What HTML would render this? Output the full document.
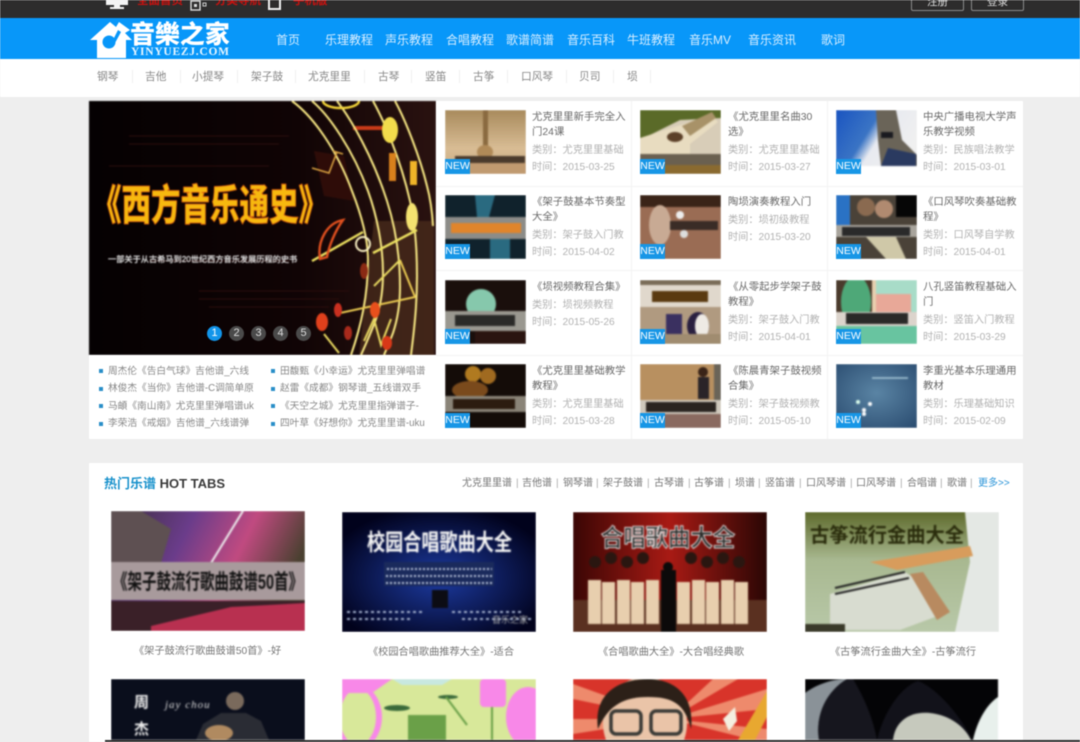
<!DOCTYPE html>
<html lang="zh"><head><meta charset="utf-8"><title>音樂之家</title>
<style>
*{margin:0;padding:0;box-sizing:border-box}
html,body{width:1080px;height:742px;overflow:hidden;background:#eeeeee}
body{position:relative;font-family:"Liberation Sans","Noto Sans CJK SC",sans-serif}
#w{position:absolute;left:0;top:0;width:1080px;height:742px;overflow:hidden;filter:blur(.45px)}
.a{position:absolute;white-space:nowrap}
.n{position:absolute;top:31.5px;color:#d8eeff;font-size:12px;line-height:16px;white-space:nowrap}
.s{position:absolute;top:70px;color:#888;font-size:10.7px;line-height:15px;white-space:nowrap}
.sp{position:absolute;top:70px;width:1px;height:13px;background:#f0f0f0}
.l{position:absolute;font-size:9.7px;line-height:14px;color:#888;white-space:nowrap}
.b{position:absolute;width:4px;height:4px;background:#2a8fc8}
.t{position:absolute;width:81px;height:64px;overflow:hidden}
.t svg,.g svg{display:block;filter:blur(.7px)}
.t i{position:absolute;left:0;bottom:0;width:25px;height:15px;background:#1796e6;color:#fff;font:normal 10.5px/15px "Liberation Sans",sans-serif;text-align:center}
.c{position:absolute;width:96px;font-size:10.4px;line-height:15px;color:#6a6a6a}
.c p{white-space:normal;word-break:break-all}
.c u{display:block;text-decoration:none;color:#b2b2b2;white-space:nowrap;line-height:16.5px;font-size:10.2px}
.c u:first-of-type{margin-top:3px}
.v{position:absolute;background:#f3f3f3}
.g{position:absolute;width:194px;height:120px;overflow:hidden}
.m{position:absolute;top:646px;font-size:10.2px;line-height:14px;color:#777;white-space:nowrap}
.tb{position:absolute;top:477px;font-size:10px;line-height:14px;color:#777;white-space:nowrap}
.d{position:absolute;top:326px;width:15px;height:15px;border-radius:50%;background:#4a4a4a;color:#ddd;font:11px/15px "Liberation Sans",sans-serif;text-align:center}
</style></head><body><div id="w">

<!-- top bar -->
<div class="a" style="left:0;top:0;width:1080px;height:18px;background:#2d2c2c"></div>
<svg class="a" style="left:104px;top:0" width="230" height="12" viewBox="0 0 230 12"><path d="M2 0H24V5H16V7H20V9H6V7H10V5H2Z" fill="#f4f4f4"/><rect x="87" y="1" width="9" height="9" fill="none" stroke="#ddd" stroke-width="1.4"/><rect x="90" y="4" width="3" height="3" fill="#ddd"/><rect x="99" y="3" width="3" height="3" fill="none" stroke="#ccc"/><path d="M165 0V9H176V0" fill="none" stroke="#eee" stroke-width="2"/></svg>
<div class="a" style="left:137px;top:-6px;color:#c8120f;font-size:11.5px;line-height:14px;font-weight:bold">全面首页</div>
<div class="a" style="left:215px;top:-6px;color:#c8120f;font-size:11.5px;line-height:14px;font-weight:bold">分类导航</div>
<div class="a" style="left:293px;top:-6px;color:#c8120f;font-size:11.5px;line-height:14px;font-weight:bold">手机版</div>
<div class="a" style="left:911px;top:-6px;width:53px;height:17px;border:1px solid #8a8a8a;border-radius:2px;color:#ddd;font-size:10.5px;line-height:15px;text-align:center">注册</div>
<div class="a" style="left:971px;top:-6px;width:53px;height:17px;border:1px solid #8a8a8a;border-radius:2px;color:#ddd;font-size:10.5px;line-height:15px;text-align:center">登录</div>

<!-- blue nav -->
<div class="a" style="left:0;top:18px;width:1080px;height:41px;background:#0897f9"></div>
<svg class="a" style="left:88px;top:20px" width="46" height="40" viewBox="0 0 46 40"><path d="M2 20 L22 2 L28 7 L31 2 L42 10 L37 13 L44 20 L38 20 V38 H9 V20 Z" fill="#fff"/><circle cx="21" cy="22" r="6.5" fill="#0897f9"/><path d="M24 22 L30 10 L33 12 L27 23Z" fill="#0897f9"/></svg>
<div class="a" style="left:130px;top:22px;color:#fff;font-size:25px;line-height:27px;font-weight:900;letter-spacing:-.1px;font-family:'Liberation Sans','Noto Sans CJK TC',sans-serif">音樂之家</div>
<div class="a" style="left:131px;top:45.5px;color:#e6f5ff;font:bold 11.5px/13px 'Liberation Serif',serif;letter-spacing:.75px">YINYUEZJ.COM</div>
<span class="n" style="left:276px">首页</span><span class="n" style="left:325px">乐理教程</span><span class="n" style="left:385px">声乐教程</span><span class="n" style="left:446px">合唱教程</span><span class="n" style="left:506px">歌谱简谱</span><span class="n" style="left:567px">音乐百科</span><span class="n" style="left:627px">牛班教程</span><span class="n" style="left:689px">音乐MV</span><span class="n" style="left:748px">音乐资讯</span><span class="n" style="left:821px">歌词</span>

<!-- sub nav -->
<div class="a" style="left:0;top:59px;width:1080px;height:38px;background:#fff"></div>
<span class="s" style="left:97px">钢琴</span><span class="s" style="left:145px">吉他</span><span class="s" style="left:192px">小提琴</span><span class="s" style="left:251px">架子鼓</span><span class="s" style="left:308px">尤克里里</span><span class="s" style="left:378px">古琴</span><span class="s" style="left:425px">竖笛</span><span class="s" style="left:473px">古筝</span><span class="s" style="left:521px">口风琴</span><span class="s" style="left:579px">贝司</span><span class="s" style="left:627px">埙</span>
<i class="sp" style="left:132px"></i><i class="sp" style="left:180px"></i><i class="sp" style="left:237px"></i><i class="sp" style="left:295px"></i><i class="sp" style="left:364px"></i><i class="sp" style="left:411px"></i><i class="sp" style="left:459px"></i><i class="sp" style="left:507px"></i><i class="sp" style="left:566px"></i><i class="sp" style="left:613px"></i><i class="sp" style="left:650px"></i>

<!-- slide -->
<svg class="a" style="left:89px;top:101px;filter:blur(.4px)" width="347" height="254" viewBox="0 0 347 254" font-family="'Liberation Sans','Noto Sans CJK SC',sans-serif">
<defs><linearGradient id="sl" x1="0" x2="1" y1="0" y2="0"><stop offset="0" stop-color="#050102"/><stop offset=".6" stop-color="#100405"/><stop offset="1" stop-color="#2a1210"/></linearGradient></defs>
<rect width="347" height="254" fill="url(#sl)"/>
<g fill="none" stroke="#2b0d0c" stroke-width="1"><path d="M40 35H200M40 43H190M20 65H180M60 160H200"/><path d="M110 190H260M110 198H250M120 206H240"/></g>
<path d="M285 120H345V254H270Z" fill="#4a2c1c" opacity=".75"/>
<path d="M225 50l30 5 10 45-30-5z" fill="#2e0c08"/>
<path d="M264 27H298" stroke="#c83a18" stroke-width="4"/>
<g fill="none" stroke="#f8e884" stroke-width="2">
<path d="M203 0C224 15 248 49 263 90 274 118 279 140 279 159 279 195 272 225 262 254"/>
<path d="M223 0C240 14 264 49 279 90 288 115 294 145 294 172 294 195 290 212 284 226 280 236 276 245 272 254"/>
<path d="M248 0C262 18 284 56 298 100 306 125 311 155 311 186 311 205 308 220 304 232 301 240 298 247 295 254"/>
<path d="M284 0C294 18 311 56 321 100 326 122 328 150 328 175 328 195 327 215 322 254"/>
<path d="M306 0C316 18 331 56 338 85 341 96 343 108 344 125"/>
</g>
<path d="M223 67L240 72 248 51M244 50l10 3" fill="none" stroke="#d8a040" stroke-width="1.6"/>
<path d="M223 160L274 131M284 152L328 129" fill="none" stroke="#ece060" stroke-width="2.4"/>
<path d="M231 158C228 140 238 122 254 119 246 130 240 145 238 156Z" fill="none" stroke="#e0501f" stroke-width="2.4"/>
<circle cx="274" cy="143" r="7" fill="none" stroke="#f6edc0" stroke-width="2"/>
<path d="M311 159L326 196 251 212" fill="none" stroke="#e8c850" stroke-width="2"/>
<path d="M311 159L285 185M235 233L250 252M275 240L285 218 292 244 302 218" stroke="#e8d860" stroke-width="2" fill="none"/>
<ellipse cx="252" cy="0" rx="18" ry="7" fill="none" stroke="#f4d53a" stroke-width="2.4"/>
<ellipse cx="301" cy="29" rx="8" ry="13" fill="#f2dc4c"/>
<rect x="300" y="52" width="7" height="28" fill="#d8801c"/><rect x="321" y="60" width="7" height="24" fill="#f0b428"/>
<ellipse cx="323" cy="116" rx="6" ry="14" fill="#f4e270"/>
<ellipse cx="233" cy="221" rx="6" ry="9" fill="#e0401c"/><ellipse cx="249" cy="209" rx="4" ry="7" fill="#c83020"/><ellipse cx="286" cy="209" rx="5" ry="8" fill="#e8501c"/><ellipse cx="259" cy="232" rx="4" ry="7" fill="#a82a1c"/><ellipse cx="298" cy="242" rx="5" ry="7" fill="#d83818"/><ellipse cx="275" cy="170" rx="4" ry="8" fill="#8a2a14"/>
<text x="3" y="119" font-size="42" font-weight="900" fill="#f7b90f" stroke="#e05a10" stroke-width=".8" textLength="236" lengthAdjust="spacingAndGlyphs">《西方音乐通史》</text>
<text x="19" y="161" font-size="8.2" fill="#f0f0f0" stroke="#f0f0f0" stroke-width=".2">一部关于从古希马到20世纪西方音乐发展历程的史书</text>
</svg>
<span class="d" style="left:207px;background:#1295ea;color:#fff">1</span><span class="d" style="left:229px">2</span><span class="d" style="left:251px">3</span><span class="d" style="left:273px">4</span><span class="d" style="left:296px">5</span>

<!-- list -->
<div class="a" style="left:89px;top:355px;width:347px;height:84px;background:#fff"></div>
<i class="b" style="left:99px;top:369px"></i><span class="l" style="left:108px;top:365px">周杰伦《告白气球》吉他谱_六线</span>
<i class="b" style="left:99px;top:387px"></i><span class="l" style="left:108px;top:382px">林俊杰《当你》吉他谱-C调简单原</span>
<i class="b" style="left:99px;top:404px"></i><span class="l" style="left:108px;top:400px">马頔《南山南》尤克里里弹唱谱uk</span>
<i class="b" style="left:99px;top:422px"></i><span class="l" style="left:108px;top:417px">李荣浩《戒烟》吉他谱_六线谱弹</span>
<i class="b" style="left:271px;top:369px"></i><span class="l" style="left:280px;top:365px">田馥甄《小幸运》尤克里里弹唱谱</span>
<i class="b" style="left:271px;top:387px"></i><span class="l" style="left:280px;top:382px">赵雷《成都》钢琴谱_五线谱双手</span>
<i class="b" style="left:271px;top:404px"></i><span class="l" style="left:280px;top:400px">《天空之城》尤克里里指弹谱子-</span>
<i class="b" style="left:271px;top:422px"></i><span class="l" style="left:280px;top:417px">四叶草《好想你》尤克里里谱-uku</span>

<!-- grid -->
<div class="a" style="left:436px;top:101px;width:587px;height:338px;background:#fff"></div>
<i class="v" style="left:631px;top:101px;width:1px;height:338px"></i><i class="v" style="left:827px;top:101px;width:1px;height:338px"></i>
<i class="v" style="left:436px;top:186px;width:587px;height:1px"></i><i class="v" style="left:436px;top:270px;width:587px;height:1px"></i><i class="v" style="left:436px;top:355px;width:587px;height:1px"></i>

<div class="t" style="left:445px;top:110px"><svg width="81" height="64"><defs><linearGradient id="a1" x2="0" y2="1"><stop offset="0" stop-color="#a88a5c"/><stop offset=".6" stop-color="#d8bc94"/><stop offset="1" stop-color="#c8a880"/></linearGradient></defs><rect width="81" height="64" fill="url(#a1)"/><rect x="38" y="0" width="5" height="40" fill="#8a6a40"/><ellipse cx="40" cy="42" rx="8" ry="7" fill="#b08a58"/><rect x="10" y="46" width="70" height="7" fill="#4a3a2c"/><rect x="0" y="53" width="81" height="11" fill="#c09a70"/></svg><i>NEW</i></div>
<div class="c" style="left:532px;top:110px"><p>尤克里里新手完全入门24课</p><u>类别：尤克里里基础</u><u>时间：2015-03-25</u></div>

<div class="t" style="left:640px;top:110px"><svg width="81" height="64"><rect width="81" height="64" fill="#d8cdb8"/><path d="M0 0H81V8L40 10 0 30Z" fill="#5a6a28"/><path d="M0 28L50 12 70 4 78 12 50 34 50 48H0Z" fill="#e8dcc0"/><path d="M42 16L72 2 76 8 50 26Z" fill="#a89268"/><ellipse cx="35" cy="27" rx="8" ry="5" fill="#5c4028"/><rect x="0" y="44" width="81" height="11" fill="#6a6050"/><rect x="0" y="55" width="81" height="9" fill="#8a6a30"/></svg><i>NEW</i></div>
<div class="c" style="left:728px;top:110px"><p>《尤克里里名曲30选》</p><u>类别：尤克里里基础</u><u>时间：2015-03-27</u></div>

<div class="t" style="left:836px;top:110px"><svg width="81" height="64"><defs><linearGradient id="a3" x1="0" x2="1" y1="0" y2=".5"><stop offset="0" stop-color="#1a54c0"/><stop offset=".45" stop-color="#3a74c4"/><stop offset=".6" stop-color="#e8eaf0"/><stop offset="1" stop-color="#f0f0f0"/></linearGradient></defs><rect width="81" height="64" fill="url(#a3)"/><path d="M40 0H60L66 30 81 45V56H45L42 30Z" fill="#6a6458"/><path d="M45 22h12v6H45z" fill="#1a1a20"/><path d="M52 38l28 6v12H45z" fill="#2a3a60"/><rect y="56" width="81" height="8" fill="#fff"/></svg><i>NEW</i></div>
<div class="c" style="left:923px;top:110px"><p>中央广播电视大学声乐教学视频</p><u>类别：民族唱法教学</u><u>时间：2015-03-01</u></div>

<div class="t" style="left:445px;top:195px"><svg width="81" height="64"><rect width="81" height="64" fill="#10222c"/><path d="M30 0h20l-6 22H32zM45 44h20v20H45z" fill="#2a6a80"/><rect y="22" width="81" height="22" fill="#8c8c88"/><rect x="6" y="28" width="70" height="10" fill="#e0852c"/></svg><i>NEW</i></div>
<div class="c" style="left:532px;top:195px"><p>《架子鼓基本节奏型大全》</p><u>类别：架子鼓入门教</u><u>时间：2015-04-02</u></div>

<div class="t" style="left:640px;top:195px"><svg width="81" height="64"><rect width="81" height="64" fill="#9a6c54"/><rect width="81" height="12" fill="#3a2418"/><ellipse cx="20" cy="30" rx="11" ry="20" fill="#c8aa94"/><circle cx="40" cy="20" r="4" fill="#eee"/><circle cx="44" cy="39" r="4" fill="#ddd"/><rect x="30" y="26" width="48" height="9" fill="#3a2c26"/></svg><i>NEW</i></div>
<div class="c" style="left:728px;top:195px"><p>陶埙演奏教程入门</p><u>类别：埙初级教程</u><u>时间：2015-03-20</u></div>

<div class="t" style="left:836px;top:195px"><svg width="81" height="64"><rect width="81" height="64" fill="#4a4238"/><rect width="14" height="40" fill="#2a72c4"/><rect x="60" width="21" height="22" fill="#060606"/><circle cx="30" cy="12" r="9" fill="#8a6a50"/><circle cx="48" cy="14" r="9" fill="#b08a70"/><rect y="30" width="81" height="12" fill="#a8a49c"/><rect x="6" y="32" width="68" height="9" fill="#2a2a2a"/><path d="M30 42l20 22H70L60 42z" fill="#cfc8a8"/></svg><i>NEW</i></div>
<div class="c" style="left:923px;top:195px"><p>《口风琴吹奏基础教程》</p><u>类别：口风琴自学教</u><u>时间：2015-04-01</u></div>

<div class="t" style="left:445px;top:280px"><svg width="81" height="64"><rect width="81" height="64" fill="#1a0f0c"/><ellipse cx="36" cy="24" rx="15" ry="15" fill="#86c8ac"/><rect y="31" width="81" height="20" fill="#9a9890"/><rect x="10" y="35" width="60" height="11" fill="#2a2a28"/><rect x="30" y="51" width="51" height="13" fill="#2a1410"/></svg><i>NEW</i></div>
<div class="c" style="left:532px;top:280px"><p>《埙视频教程合集》</p><u>类别：埙视频教程</u><u>时间：2015-05-26</u></div>

<div class="t" style="left:640px;top:280px"><svg width="81" height="64"><rect width="81" height="64" fill="#b09a80"/><rect width="81" height="5" fill="#7a6c58"/><rect y="5" width="81" height="22" fill="#e0d8cc"/><rect x="12" y="11" width="56" height="11" fill="#5a3a10"/><rect x="26" y="34" width="16" height="20" fill="#3a3060"/><ellipse cx="58" cy="46" rx="11" ry="14" fill="#2a2040"/><ellipse cx="62" cy="46" rx="7" ry="12" fill="#eeeae4"/><rect y="54" width="81" height="10" fill="#a08c70"/></svg><i>NEW</i></div>
<div class="c" style="left:728px;top:280px"><p>《从零起步学架子鼓教程》</p><u>类别：架子鼓入门教</u><u>时间：2015-04-01</u></div>

<div class="t" style="left:836px;top:280px"><svg width="81" height="64"><rect width="81" height="64" fill="#a8dcc8"/><rect width="36" height="64" fill="#4a3a2c"/><ellipse cx="20" cy="22" rx="15" ry="26" fill="#4ea878"/><rect x="36" width="4" height="64" fill="#e8d0b0"/><path d="M40 14H75V32H40z" fill="#e8a898"/><rect y="32" width="81" height="14" fill="#dcd4cc"/><rect x="10" y="33" width="62" height="11" fill="#2a2a28"/><rect x="0" y="46" width="81" height="18" fill="#68c4a0"/></svg><i>NEW</i></div>
<div class="c" style="left:923px;top:280px"><p>八孔竖笛教程基础入门</p><u>类别：竖笛入门教程</u><u>时间：2015-03-29</u></div>

<div class="t" style="left:445px;top:364px"><svg width="81" height="64"><rect width="81" height="64" fill="#140c08"/><circle cx="28" cy="10" r="8" fill="#b07a20"/><circle cx="43" cy="12" r="8" fill="#a06a20"/><ellipse cx="25" cy="26" rx="18" ry="9" fill="#7a4a1c"/><rect y="32" width="81" height="16" fill="#8a8478"/><rect x="8" y="35" width="62" height="10" fill="#2c1c10"/></svg><i>NEW</i></div>
<div class="c" style="left:532px;top:364px"><p>《尤克里里基础教学教程》</p><u>类别：尤克里里基础</u><u>时间：2015-03-28</u></div>

<div class="t" style="left:640px;top:364px"><svg width="81" height="64"><rect width="81" height="64" fill="#b89060"/><circle cx="63" cy="8" r="5" fill="#3a2418"/><rect x="58" y="13" width="11" height="22" fill="#2a2428"/><rect x="74" width="7" height="36" fill="#6a6458"/><rect y="36" width="81" height="14" fill="#cfc8bc"/><rect x="6" y="38" width="70" height="10" fill="#2a2420"/><rect y="50" width="81" height="14" fill="#8a6a60"/></svg><i>NEW</i></div>
<div class="c" style="left:728px;top:364px"><p>《陈晨青架子鼓视频合集》</p><u>类别：架子鼓视频教</u><u>时间：2015-05-10</u></div>

<div class="t" style="left:836px;top:364px"><svg width="81" height="64"><defs><radialGradient id="a12" cx=".5" cy=".45" r=".7"><stop offset="0" stop-color="#5a84a4"/><stop offset="1" stop-color="#2c4e72"/></radialGradient></defs><rect width="81" height="64" fill="url(#a12)"/><path d="M36 14H72" stroke="#a8c8d8" stroke-width="1.5"/><circle cx="22" cy="38" r="2" fill="#dfe"/><circle cx="28" cy="46" r="2" fill="#fff"/><circle cx="34" cy="40" r="2" fill="#fff"/><circle cx="28" cy="50" r="2" fill="#fff"/></svg><i>NEW</i></div>
<div class="c" style="left:923px;top:364px"><p>李重光基本乐理通用教材</p><u>类别：乐理基础知识</u><u>时间：2015-02-09</u></div>

<!-- hot tabs -->
<div class="a" style="left:89px;top:463px;width:934px;height:279px;background:#fff"></div>
<div class="a" style="left:104px;top:475px;font-size:13px;line-height:17px;font-weight:bold;color:#1a92cc">热门乐谱 <span style="color:#3a3a3a;font-weight:bold;font-size:13px">HOT TABS</span></div>
<span class="tb" style="left:462px">尤克里里谱</span>
<span class="tb" style="left:516px;color:#aaa">|</span>
<span class="tb" style="left:522px">吉他谱</span>
<span class="tb" style="left:556px;color:#aaa">|</span>
<span class="tb" style="left:563px">钢琴谱</span>
<span class="tb" style="left:596px;color:#aaa">|</span>
<span class="tb" style="left:603px">架子鼓谱</span>
<span class="tb" style="left:647px;color:#aaa">|</span>
<span class="tb" style="left:654px">古琴谱</span>
<span class="tb" style="left:688px;color:#aaa">|</span>
<span class="tb" style="left:694px">古筝谱</span>
<span class="tb" style="left:728px;color:#aaa">|</span>
<span class="tb" style="left:735px">埙谱</span>
<span class="tb" style="left:758px;color:#aaa">|</span>
<span class="tb" style="left:765px">竖笛谱</span>
<span class="tb" style="left:799px;color:#aaa">|</span>
<span class="tb" style="left:806px">口风琴谱</span>
<span class="tb" style="left:850px;color:#aaa">|</span>
<span class="tb" style="left:856px">口风琴谱</span>
<span class="tb" style="left:900px;color:#aaa">|</span>
<span class="tb" style="left:907px">合唱谱</span>
<span class="tb" style="left:940px;color:#aaa">|</span>
<span class="tb" style="left:947px">歌谱</span>
<span class="tb" style="left:970px;color:#aaa">|</span>
<span class="tb" style="left:978px;color:#2a94d8">更多&gt;&gt;</span>

<div class="g" style="left:111px;top:511px"><svg width="194" height="120" font-family="'Liberation Sans','Noto Sans CJK SC',sans-serif"><defs><linearGradient id="b1" x1="0" x2="1" y1="0" y2=".3"><stop offset="0" stop-color="#3a2c3c"/><stop offset=".4" stop-color="#6a3c8a"/><stop offset=".7" stop-color="#c04a80"/><stop offset="1" stop-color="#4a4030"/></linearGradient></defs><rect width="194" height="120" fill="url(#b1)"/><path d="M0 0H30L60 18 50 52H0Z" fill="#5e5052"/><path d="M132 0L100 52" stroke="#eee" stroke-width="2"/><rect y="90" width="194" height="30" fill="#3a2028"/><path d="M40 115L120 96 194 92V120H40Z" fill="#b83050"/><rect y="51" width="194" height="38" fill="#a89a9c"/><text x="2" y="78" font-size="21" font-weight="bold" fill="#111" textLength="190" lengthAdjust="spacingAndGlyphs">《架子鼓流行歌曲鼓谱50首》</text></svg></div>
<div class="g" style="left:342px;top:512px"><svg width="194" height="120" font-family="'Liberation Sans','Noto Sans CJK SC',sans-serif"><defs><radialGradient id="b2" cx=".5" cy=".55" r=".6"><stop offset="0" stop-color="#1c3aa0"/><stop offset="1" stop-color="#01021c"/></radialGradient></defs><rect width="194" height="120" fill="url(#b2)"/><text x="25" y="38" font-size="23" font-weight="bold" fill="#f4f4f4" textLength="145" lengthAdjust="spacingAndGlyphs">校园合唱歌曲大全</text><rect x="42" y="50" width="110" height="24" fill="#1a2a5c"/><g stroke="#c0c8e0" stroke-width="2" stroke-dasharray="2 2"><path d="M45 57H150M44 64H152M44 71H152"/></g><rect x="90" y="78" width="16" height="18" fill="#0c0c14"/><g stroke="#a8b4d0" stroke-width="2" stroke-dasharray="3 3"><path d="M5 100H80M110 100H180M5 107H70M120 107H190"/></g><text x="150" y="111" font-size="9" fill="#a8a8a8">音乐之家</text></svg></div>
<div class="g" style="left:573px;top:512px"><svg width="194" height="120" font-family="'Liberation Sans','Noto Sans CJK SC',sans-serif"><defs><linearGradient id="b3" x1="0" x2="1"><stop offset="0" stop-color="#3a0604"/><stop offset=".5" stop-color="#a81a14"/><stop offset="1" stop-color="#2a0604"/></linearGradient></defs><rect width="194" height="120" fill="url(#b3)"/><rect y="88" width="194" height="32" fill="#5a3020"/><text x="28" y="34" font-size="24" font-weight="bold" fill="#2a2a28" stroke="#f0f0f0" stroke-width=".9" textLength="134" lengthAdjust="spacingAndGlyphs">合唱歌曲大全</text><g fill="#2a1610"><circle cx="22" cy="50" r="6"/><circle cx="38" cy="46" r="6"/><circle cx="54" cy="50" r="6"/><circle cx="70" cy="46" r="6"/><circle cx="118" cy="46" r="6"/><circle cx="134" cy="50" r="6"/><circle cx="150" cy="46" r="6"/><circle cx="166" cy="50" r="6"/></g><g fill="#e8cfae"><rect x="15" y="68" width="13" height="44"/><rect x="29" y="70" width="13" height="42"/><rect x="44" y="68" width="13" height="44"/><rect x="58" y="70" width="13" height="42"/><rect x="73" y="68" width="13" height="44"/><rect x="104" y="70" width="13" height="42"/><rect x="119" y="68" width="13" height="44"/><rect x="133" y="70" width="13" height="42"/><rect x="148" y="68" width="13" height="44"/><rect x="162" y="70" width="13" height="42"/></g><rect x="88" y="58" width="15" height="62" fill="#0c0a0a"/><circle cx="95" cy="55" r="5" fill="#0c0a0a"/></svg></div>
<div class="g" style="left:805px;top:512px"><svg width="194" height="120" font-family="'Liberation Sans','Noto Sans CJK SC',sans-serif"><defs><linearGradient id="b4" x2="0" y2="1"><stop offset="0" stop-color="#5e6a2c"/><stop offset=".4" stop-color="#a8b890"/><stop offset="1" stop-color="#b8c8a8"/></linearGradient></defs><rect width="194" height="120" fill="url(#b4)"/><path d="M160 0H194V120H150L165 50Z" fill="#e4e8e4"/><text x="5" y="30" font-size="20" font-weight="bold" fill="#2a2c0c" textLength="154" lengthAdjust="spacingAndGlyphs">古筝流行金曲大全</text><path d="M65 50L165 34 168 44 92 58Z" fill="#d89c5c"/><path d="M25 82L100 60 118 72 130 105 95 118H25Z" fill="#d8dcd0"/><path d="M30 76L100 60M30 82L104 66" stroke="#222" stroke-width="2"/><path d="M105 62L132 108 145 100 118 60Z" fill="#b88a60"/><rect x="0" y="112" width="40" height="8" fill="#3a3a2a"/></svg></div>

<div class="m" style="left:134px;top:645px">《架子鼓流行歌曲鼓谱50首》-好</div>
<div class="m" style="left:368px">《校园合唱歌曲推荐大全》-适合</div>
<div class="m" style="left:598px">《合唱歌曲大全》-大合唱经典歌</div>
<div class="m" style="left:830px">《古筝流行金曲大全》-古筝流行</div>

<div class="g" style="left:111px;top:679px;height:61px"><svg width="194" height="61" font-family="'Liberation Sans','Noto Sans CJK SC',sans-serif"><rect width="194" height="61" fill="#0a0e1c"/><text x="23" y="28" font-size="15" font-weight="bold" fill="#eee">周</text><text x="23" y="55" font-size="15" font-weight="bold" fill="#eee">杰</text><text x="54" y="29" font-size="11" font-style="italic" font-family="'Liberation Serif',serif" fill="#ddd" letter-spacing="1">jay chou</text><circle cx="124" cy="22" r="9" fill="#7a6a5c"/><path d="M85 61L92 45 110 34H135L150 42 158 61Z" fill="#2a2c34"/><ellipse cx="108" cy="54" rx="14" ry="8" fill="#b08a60"/></svg></div>
<div class="g" style="left:342px;top:679px;height:61px"><svg width="194" height="61"><rect width="194" height="61" fill="#d8e89a"/><ellipse cx="12" cy="38" rx="28" ry="34" fill="#f888e8"/><ellipse cx="16" cy="38" rx="18" ry="28" fill="#d8e89a"/><path d="M0 0H50L30 14H0Z" fill="#f888e8"/><rect x="138" y="0" width="26" height="28" rx="4" fill="#f888e8"/><ellipse cx="186" cy="38" rx="22" ry="30" fill="#f888e8"/><rect x="66" y="36" width="38" height="25" fill="#6aa048"/><ellipse cx="55" cy="29" rx="13" ry="3" fill="#3a6a3a"/><ellipse cx="106" cy="18" rx="10" ry="2" fill="#3a6a3a"/><path d="M104 18L125 46M150 28V61" stroke="#6aa048" stroke-width="2"/><path d="M50 0H110L100 6H60Z" fill="#c8e8e0"/></svg></div>
<div class="g" style="left:573px;top:679px;height:61px"><svg width="194" height="61"><rect width="194" height="61" fill="#d8342a"/><path d="M97 40L0 5V20ZM97 40L0 40V55ZM97 40L140 0H165ZM97 40L194 10V30ZM97 40L194 50V61H180Z" fill="#ee8a6c"/><path d="M194 12L165 61H182L194 38Z" fill="#e8a830"/><ellipse cx="72" cy="44" rx="42" ry="46" fill="#eac4a8"/><path d="M25 50C20 15 45 0 75 0 100 0 122 15 118 50 112 25 100 18 75 18 52 18 36 25 25 50Z" fill="#2c2018"/><rect x="38" y="32" width="30" height="23" rx="5" fill="none" stroke="#3a3a36" stroke-width="3.5"/><rect x="78" y="32" width="30" height="23" rx="5" fill="none" stroke="#3a3a36" stroke-width="3.5"/><path d="M150 40l12-12 2 14-8 10z" fill="#f4efe0"/></svg></div>
<div class="g" style="left:805px;top:679px;height:61px"><svg width="193" height="61"><rect width="193" height="61" fill="#040406"/><path d="M0 14C12 5 28 0 42 0 22 12 10 35 14 61H0Z" fill="#8a9298"/><path d="M14 61C10 35 22 12 42 0H48C60 20 68 40 72 61Z" fill="#16161e"/><path d="M72 61C78 35 95 8 113 2 130 8 155 35 167 61Z" fill="#12121a"/><path d="M88 61C90 42 105 32 125 34 145 36 160 48 166 61Z" fill="#c6c9bd"/><path d="M168 61C172 42 182 25 193 18V61Z" fill="#e8f0ec"/></svg></div>

<!-- bottom strip -->
<div class="a" style="left:105px;top:740px;width:975px;height:2px;background:#2c2c2c"></div>
</div></body></html>
